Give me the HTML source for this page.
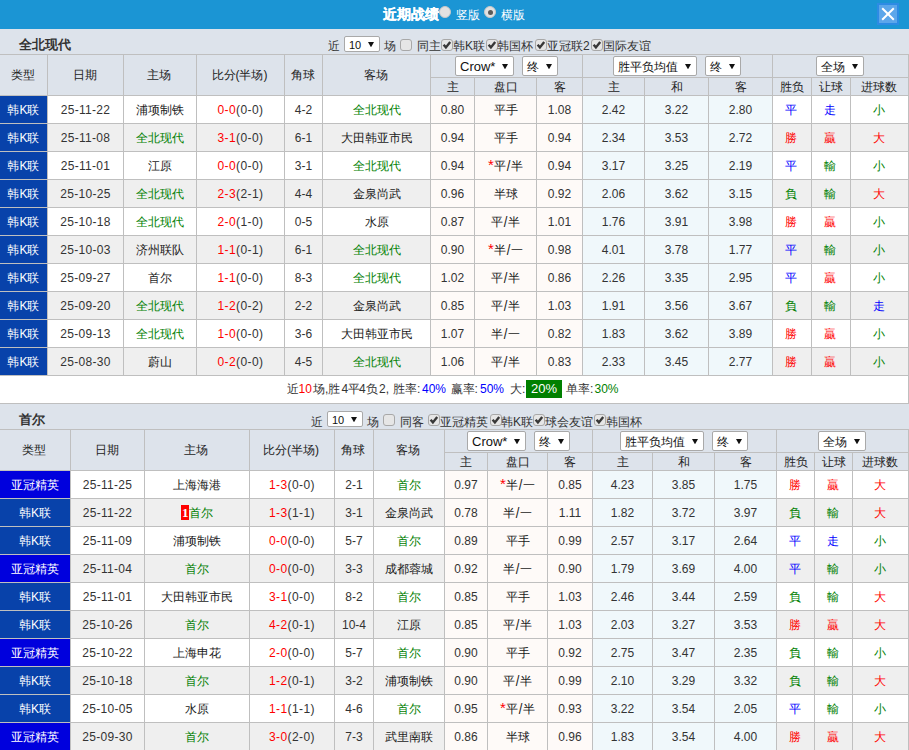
<!DOCTYPE html><html><head><meta charset="utf-8"><style>
*{margin:0;padding:0;box-sizing:border-box}
html,body{width:909px;height:750px;overflow:hidden;background:#fff}
body{position:relative;font-family:"Liberation Sans",sans-serif;font-size:12px;color:#333}
body>div{position:absolute}
.c{display:flex;align-items:center;justify-content:center;white-space:nowrap;font-size:12px}
.t{white-space:nowrap;font-size:12px}
.sel{background:#fff;border:1px solid #a9a9a9;border-radius:2px;white-space:nowrap;color:#111}
.sel span{position:absolute;left:4px;top:1px}
.sel svg{position:absolute}
.cb{width:12px;height:12px;border:1px solid #a8a8a8;border-radius:3px;background:#e6e6e6}
.cb svg{position:absolute;left:-1px;top:-1px}
.radio{border-radius:50%;background:#e2e2e2;border:1px solid #c8c8c8}
.radio i{position:absolute;left:2.5px;top:2.5px;width:5px;height:5px;border-radius:50%;background:#5a5a5a}
.badge{background:#f00;color:#fff;font-weight:bold;padding:0 1px;font-size:13px;line-height:15px;display:inline-block;width:8px;font-family:'Liberation Serif',serif;vertical-align:top;margin-top:0;text-align:center}
.z{position:relative;top:1px}
i{font-style:normal}
.sl{display:inline-block;width:5px;text-align:center;font-size:13px;transform:scaleY(1.15)}
.st{display:inline-block;width:6px;color:#f00;font-size:15px;line-height:12px;vertical-align:top;margin-top:1px}
.big{background:#008000;color:#fff;padding:2px 4px}
</style></head><body><div style="left:0px;top:0px;width:909px;height:29px;background:#1b95d4"></div>
<div class="t" style="left:383px;top:5px;color:#fff;font-weight:bold;font-size:14px;line-height:18px;-webkit-text-stroke:0.3px #fff">近期战绩</div>
<div class="radio" style="left:439px;top:6px;width:12px;height:12px;"></div>
<div class="t" style="left:456px;top:6px;color:#fff;font-size:12px;line-height:18px">竖版</div>
<div class="radio" style="left:484px;top:6px;width:12px;height:12px;"><i></i></div>
<div class="t" style="left:501px;top:6px;color:#fff;font-size:12px;line-height:18px">横版</div>
<div style="left:877px;top:3px;width:22px;height:22px"><svg width="22" height="22" viewBox="0 0 22 22"><rect x="0" y="0" width="22" height="22" fill="#2d8be4"/><rect x="2" y="2" width="18" height="18" fill="#5ca6ea"/><path d="M5.2 5.2L16.8 16.8M16.8 5.2L5.2 16.8" stroke="#fff" stroke-width="2"/></svg></div>
<div style="left:0px;top:29px;width:909px;height:25px;background:#dde3eb"></div>
<div class="t" style="left:19px;top:37px;font-weight:bold;font-size:13px;color:#333;line-height:16px">全北现代</div>
<div class="t" style="left:328px;top:37.5px;line-height:16px">近</div>
<div class="sel" style="left:344px;top:36px;width:36px;height:16px"><span style="font-size:11px;line-height:14px">10</span><svg width="6" height="5" style="right:5px;top:5px"><path d="M0 0H6L3 5.3Z" fill="#111"/></svg></div>
<div class="t" style="left:384px;top:37.5px;line-height:16px">场</div>
<div class="cb" style="left:400px;top:39px"></div>
<div class="t" style="left:417px;top:37.5px;line-height:16px">同主</div>
<div class="cb" style="left:441px;top:39px"><svg width="12" height="12" viewBox="0 0 12 12"><path d="M2.6 5.8L4.9 8.4L9.2 3" fill="none" stroke="#383838" stroke-width="2.4"/></svg></div>
<div class="t" style="left:453px;top:37.5px;line-height:16px">韩K联</div>
<div class="cb" style="left:486px;top:39px"><svg width="12" height="12" viewBox="0 0 12 12"><path d="M2.6 5.8L4.9 8.4L9.2 3" fill="none" stroke="#383838" stroke-width="2.4"/></svg></div>
<div class="t" style="left:497px;top:37.5px;line-height:16px">韩国杯</div>
<div class="cb" style="left:535px;top:39px"><svg width="12" height="12" viewBox="0 0 12 12"><path d="M2.6 5.8L4.9 8.4L9.2 3" fill="none" stroke="#383838" stroke-width="2.4"/></svg></div>
<div class="t" style="left:547px;top:37.5px;line-height:16px">亚冠联2</div>
<div class="cb" style="left:591px;top:39px"><svg width="12" height="12" viewBox="0 0 12 12"><path d="M2.6 5.8L4.9 8.4L9.2 3" fill="none" stroke="#383838" stroke-width="2.4"/></svg></div>
<div class="t" style="left:603px;top:37.5px;line-height:16px">国际友谊</div>
<div style="left:0px;top:54px;width:909px;height:1px;background:#bfbfbf"></div>
<div style="left:0px;top:55px;width:909px;height:40px;background:#dde3eb"></div>
<div class="c" style="left:-1px;top:55px;width:47px;height:40px;color:#222">类型</div>
<div class="c" style="left:47px;top:55px;width:75px;height:40px;color:#222">日期</div>
<div class="c" style="left:123px;top:55px;width:72px;height:40px;color:#222">主场</div>
<div class="c" style="left:196px;top:55px;width:87px;height:40px;color:#222">比分(半场)</div>
<div class="c" style="left:284px;top:55px;width:37px;height:40px;color:#222">角球</div>
<div class="c" style="left:322px;top:55px;width:107px;height:40px;color:#222">客场</div>
<div style="left:47px;top:55px;width:1px;height:40px;background:#bfbfbf"></div>
<div style="left:123px;top:55px;width:1px;height:40px;background:#bfbfbf"></div>
<div style="left:196px;top:55px;width:1px;height:40px;background:#bfbfbf"></div>
<div style="left:284px;top:55px;width:1px;height:40px;background:#bfbfbf"></div>
<div style="left:322px;top:55px;width:1px;height:40px;background:#bfbfbf"></div>
<div style="left:430px;top:55px;width:1px;height:40px;background:#bfbfbf"></div>
<div style="left:582px;top:55px;width:1px;height:40px;background:#bfbfbf"></div>
<div style="left:772px;top:55px;width:1px;height:40px;background:#bfbfbf"></div>
<div style="left:908px;top:55px;width:1px;height:40px;background:#bfbfbf"></div>
<div style="left:430px;top:77px;width:479px;height:1px;background:#bfbfbf"></div>
<div class="c" style="left:431px;top:78px;width:43px;height:17px;color:#222"><span class="z">主</span></div>
<div style="left:474px;top:78px;width:1px;height:17px;background:#bfbfbf"></div>
<div class="c" style="left:475px;top:78px;width:61px;height:17px;color:#222"><span class="z">盘口</span></div>
<div style="left:536px;top:78px;width:1px;height:17px;background:#bfbfbf"></div>
<div class="c" style="left:537px;top:78px;width:45px;height:17px;color:#222"><span class="z">客</span></div>
<div style="left:582px;top:78px;width:1px;height:17px;background:#bfbfbf"></div>
<div class="c" style="left:583px;top:78px;width:61px;height:17px;color:#222"><span class="z">主</span></div>
<div style="left:644px;top:78px;width:1px;height:17px;background:#bfbfbf"></div>
<div class="c" style="left:645px;top:78px;width:63px;height:17px;color:#222"><span class="z">和</span></div>
<div style="left:708px;top:78px;width:1px;height:17px;background:#bfbfbf"></div>
<div class="c" style="left:709px;top:78px;width:63px;height:17px;color:#222"><span class="z">客</span></div>
<div style="left:772px;top:78px;width:1px;height:17px;background:#bfbfbf"></div>
<div class="c" style="left:773px;top:78px;width:38px;height:17px;color:#222"><span class="z">胜负</span></div>
<div style="left:811px;top:78px;width:1px;height:17px;background:#bfbfbf"></div>
<div class="c" style="left:812px;top:78px;width:38px;height:17px;color:#222"><span class="z">让球</span></div>
<div style="left:850px;top:78px;width:1px;height:17px;background:#bfbfbf"></div>
<div class="c" style="left:851px;top:78px;width:56px;height:17px;color:#222"><span class="z">进球数</span></div>
<div style="left:908px;top:78px;width:1px;height:17px;background:#bfbfbf"></div>
<div class="sel" style="left:455px;top:56px;width:59px;height:20px"><span style="font-size:13px;line-height:18px">Crow*</span><svg width="6" height="5" style="right:5px;top:7px"><path d="M0 0H6L3 5.3Z" fill="#111"/></svg></div>
<div class="sel" style="left:522px;top:56px;width:36px;height:20px"><span style="font-size:12px;line-height:18px">终</span><svg width="6" height="5" style="right:5px;top:7px"><path d="M0 0H6L3 5.3Z" fill="#111"/></svg></div>
<div class="sel" style="left:613px;top:56px;width:84px;height:20px"><span style="font-size:12px;line-height:18px">胜平负均值</span><svg width="6" height="5" style="right:5px;top:7px"><path d="M0 0H6L3 5.3Z" fill="#111"/></svg></div>
<div class="sel" style="left:705px;top:56px;width:36px;height:20px"><span style="font-size:12px;line-height:18px">终</span><svg width="6" height="5" style="right:5px;top:7px"><path d="M0 0H6L3 5.3Z" fill="#111"/></svg></div>
<div class="sel" style="left:816px;top:56px;width:48px;height:20px"><span style="font-size:12px;line-height:18px">全场</span><svg width="6" height="5" style="right:5px;top:7px"><path d="M0 0H6L3 5.3Z" fill="#111"/></svg></div>
<div style="left:0px;top:95px;width:909px;height:1px;background:#bfbfbf"></div>
<div class="c" style="left:0px;top:96px;width:47px;height:27px;background:#0842aa;color:#fff"><span class="z">韩K联</span></div>
<div class="c" style="left:48px;top:96px;width:75px;height:27px;background:#ffffff;color:#333"><span style="letter-spacing:.3px">25-11-22</span></div>
<div class="c" style="left:124px;top:96px;width:72px;height:27px;background:#ffffff;color:#1a1a1a"><span class="z">浦项制铁</span></div>
<div class="c" style="left:197px;top:96px;width:87px;height:27px;background:#ffffff;color:#333"><span style="letter-spacing:.4px"><span style="color:#ff0000">0-0</span>(0-0)</span></div>
<div class="c" style="left:285px;top:96px;width:37px;height:27px;background:#ffffff;color:#333">4-2</div>
<div class="c" style="left:323px;top:96px;width:107px;height:27px;background:#ffffff;color:#1a1a1a"><span class="z"><span style="color:#008000">全北现代</span></span></div>
<div class="c" style="left:431px;top:96px;width:43px;height:27px;background:#fefaf8;color:#333">0.80</div>
<div class="c" style="left:475px;top:96px;width:61px;height:27px;background:#fefaf8;color:#1a1a1a"><span class="z">平手</span></div>
<div class="c" style="left:537px;top:96px;width:45px;height:27px;background:#fefaf8;color:#333">1.08</div>
<div class="c" style="left:583px;top:96px;width:61px;height:27px;background:#f0f8fb;color:#333">2.42</div>
<div class="c" style="left:645px;top:96px;width:63px;height:27px;background:#f0f8fb;color:#333">3.22</div>
<div class="c" style="left:709px;top:96px;width:63px;height:27px;background:#f0f8fb;color:#333">2.80</div>
<div class="c" style="left:773px;top:96px;width:38px;height:27px;background:#ffffff;color:#333;padding-right:2px"><span class="z"><span style="color:#0000ff">平</span></span></div>
<div class="c" style="left:812px;top:96px;width:38px;height:27px;background:#ffffff;color:#333;padding-right:2px"><span class="z"><span style="color:#0000ff">走</span></span></div>
<div class="c" style="left:851px;top:96px;width:57px;height:27px;background:#ffffff;color:#333;padding-right:2px"><span class="z"><span style="color:#008000">小</span></span></div>
<div style="left:47px;top:96px;width:1px;height:27px;background:#bfbfbf"></div>
<div style="left:123px;top:96px;width:1px;height:27px;background:#bfbfbf"></div>
<div style="left:196px;top:96px;width:1px;height:27px;background:#bfbfbf"></div>
<div style="left:284px;top:96px;width:1px;height:27px;background:#bfbfbf"></div>
<div style="left:322px;top:96px;width:1px;height:27px;background:#bfbfbf"></div>
<div style="left:430px;top:96px;width:1px;height:27px;background:#bfbfbf"></div>
<div style="left:474px;top:96px;width:1px;height:27px;background:#bfbfbf"></div>
<div style="left:536px;top:96px;width:1px;height:27px;background:#bfbfbf"></div>
<div style="left:582px;top:96px;width:1px;height:27px;background:#bfbfbf"></div>
<div style="left:644px;top:96px;width:1px;height:27px;background:#bfbfbf"></div>
<div style="left:708px;top:96px;width:1px;height:27px;background:#bfbfbf"></div>
<div style="left:772px;top:96px;width:1px;height:27px;background:#bfbfbf"></div>
<div style="left:811px;top:96px;width:1px;height:27px;background:#bfbfbf"></div>
<div style="left:850px;top:96px;width:1px;height:27px;background:#bfbfbf"></div>
<div style="left:908px;top:96px;width:1px;height:27px;background:#bfbfbf"></div>
<div style="left:0px;top:123px;width:909px;height:1px;background:#bfbfbf"></div>
<div class="c" style="left:0px;top:124px;width:47px;height:27px;background:#0842aa;color:#fff"><span class="z">韩K联</span></div>
<div class="c" style="left:48px;top:124px;width:75px;height:27px;background:#efefef;color:#333"><span style="letter-spacing:.3px">25-11-08</span></div>
<div class="c" style="left:124px;top:124px;width:72px;height:27px;background:#efefef;color:#1a1a1a"><span class="z"><span style="color:#008000">全北现代</span></span></div>
<div class="c" style="left:197px;top:124px;width:87px;height:27px;background:#efefef;color:#333"><span style="letter-spacing:.4px"><span style="color:#ff0000">3-1</span>(0-0)</span></div>
<div class="c" style="left:285px;top:124px;width:37px;height:27px;background:#efefef;color:#333">6-1</div>
<div class="c" style="left:323px;top:124px;width:107px;height:27px;background:#efefef;color:#1a1a1a"><span class="z">大田韩亚市民</span></div>
<div class="c" style="left:431px;top:124px;width:43px;height:27px;background:#fefaf8;color:#333">0.94</div>
<div class="c" style="left:475px;top:124px;width:61px;height:27px;background:#fefaf8;color:#1a1a1a"><span class="z">平手</span></div>
<div class="c" style="left:537px;top:124px;width:45px;height:27px;background:#fefaf8;color:#333">0.94</div>
<div class="c" style="left:583px;top:124px;width:61px;height:27px;background:#f0f8fb;color:#333">2.34</div>
<div class="c" style="left:645px;top:124px;width:63px;height:27px;background:#f0f8fb;color:#333">3.53</div>
<div class="c" style="left:709px;top:124px;width:63px;height:27px;background:#f0f8fb;color:#333">2.72</div>
<div class="c" style="left:773px;top:124px;width:38px;height:27px;background:#efefef;color:#333;padding-right:2px"><span class="z"><span style="color:#ff0000">勝</span></span></div>
<div class="c" style="left:812px;top:124px;width:38px;height:27px;background:#efefef;color:#333;padding-right:2px"><span class="z"><span style="color:#ff0000">贏</span></span></div>
<div class="c" style="left:851px;top:124px;width:57px;height:27px;background:#efefef;color:#333;padding-right:2px"><span class="z"><span style="color:#ff0000">大</span></span></div>
<div style="left:47px;top:124px;width:1px;height:27px;background:#bfbfbf"></div>
<div style="left:123px;top:124px;width:1px;height:27px;background:#bfbfbf"></div>
<div style="left:196px;top:124px;width:1px;height:27px;background:#bfbfbf"></div>
<div style="left:284px;top:124px;width:1px;height:27px;background:#bfbfbf"></div>
<div style="left:322px;top:124px;width:1px;height:27px;background:#bfbfbf"></div>
<div style="left:430px;top:124px;width:1px;height:27px;background:#bfbfbf"></div>
<div style="left:474px;top:124px;width:1px;height:27px;background:#bfbfbf"></div>
<div style="left:536px;top:124px;width:1px;height:27px;background:#bfbfbf"></div>
<div style="left:582px;top:124px;width:1px;height:27px;background:#bfbfbf"></div>
<div style="left:644px;top:124px;width:1px;height:27px;background:#bfbfbf"></div>
<div style="left:708px;top:124px;width:1px;height:27px;background:#bfbfbf"></div>
<div style="left:772px;top:124px;width:1px;height:27px;background:#bfbfbf"></div>
<div style="left:811px;top:124px;width:1px;height:27px;background:#bfbfbf"></div>
<div style="left:850px;top:124px;width:1px;height:27px;background:#bfbfbf"></div>
<div style="left:908px;top:124px;width:1px;height:27px;background:#bfbfbf"></div>
<div style="left:0px;top:151px;width:909px;height:1px;background:#bfbfbf"></div>
<div class="c" style="left:0px;top:152px;width:47px;height:27px;background:#0842aa;color:#fff"><span class="z">韩K联</span></div>
<div class="c" style="left:48px;top:152px;width:75px;height:27px;background:#ffffff;color:#333"><span style="letter-spacing:.3px">25-11-01</span></div>
<div class="c" style="left:124px;top:152px;width:72px;height:27px;background:#ffffff;color:#1a1a1a"><span class="z">江原</span></div>
<div class="c" style="left:197px;top:152px;width:87px;height:27px;background:#ffffff;color:#333"><span style="letter-spacing:.4px"><span style="color:#ff0000">0-0</span>(0-0)</span></div>
<div class="c" style="left:285px;top:152px;width:37px;height:27px;background:#ffffff;color:#333">3-1</div>
<div class="c" style="left:323px;top:152px;width:107px;height:27px;background:#ffffff;color:#1a1a1a"><span class="z"><span style="color:#008000">全北现代</span></span></div>
<div class="c" style="left:431px;top:152px;width:43px;height:27px;background:#fefaf8;color:#333">0.94</div>
<div class="c" style="left:475px;top:152px;width:61px;height:27px;background:#fefaf8;color:#1a1a1a"><span class="z"><i class="st">*</i>平<i class="sl">/</i>半</span></div>
<div class="c" style="left:537px;top:152px;width:45px;height:27px;background:#fefaf8;color:#333">0.94</div>
<div class="c" style="left:583px;top:152px;width:61px;height:27px;background:#f0f8fb;color:#333">3.17</div>
<div class="c" style="left:645px;top:152px;width:63px;height:27px;background:#f0f8fb;color:#333">3.25</div>
<div class="c" style="left:709px;top:152px;width:63px;height:27px;background:#f0f8fb;color:#333">2.19</div>
<div class="c" style="left:773px;top:152px;width:38px;height:27px;background:#ffffff;color:#333;padding-right:2px"><span class="z"><span style="color:#0000ff">平</span></span></div>
<div class="c" style="left:812px;top:152px;width:38px;height:27px;background:#ffffff;color:#333;padding-right:2px"><span class="z"><span style="color:#008000">輸</span></span></div>
<div class="c" style="left:851px;top:152px;width:57px;height:27px;background:#ffffff;color:#333;padding-right:2px"><span class="z"><span style="color:#008000">小</span></span></div>
<div style="left:47px;top:152px;width:1px;height:27px;background:#bfbfbf"></div>
<div style="left:123px;top:152px;width:1px;height:27px;background:#bfbfbf"></div>
<div style="left:196px;top:152px;width:1px;height:27px;background:#bfbfbf"></div>
<div style="left:284px;top:152px;width:1px;height:27px;background:#bfbfbf"></div>
<div style="left:322px;top:152px;width:1px;height:27px;background:#bfbfbf"></div>
<div style="left:430px;top:152px;width:1px;height:27px;background:#bfbfbf"></div>
<div style="left:474px;top:152px;width:1px;height:27px;background:#bfbfbf"></div>
<div style="left:536px;top:152px;width:1px;height:27px;background:#bfbfbf"></div>
<div style="left:582px;top:152px;width:1px;height:27px;background:#bfbfbf"></div>
<div style="left:644px;top:152px;width:1px;height:27px;background:#bfbfbf"></div>
<div style="left:708px;top:152px;width:1px;height:27px;background:#bfbfbf"></div>
<div style="left:772px;top:152px;width:1px;height:27px;background:#bfbfbf"></div>
<div style="left:811px;top:152px;width:1px;height:27px;background:#bfbfbf"></div>
<div style="left:850px;top:152px;width:1px;height:27px;background:#bfbfbf"></div>
<div style="left:908px;top:152px;width:1px;height:27px;background:#bfbfbf"></div>
<div style="left:0px;top:179px;width:909px;height:1px;background:#bfbfbf"></div>
<div class="c" style="left:0px;top:180px;width:47px;height:27px;background:#0842aa;color:#fff"><span class="z">韩K联</span></div>
<div class="c" style="left:48px;top:180px;width:75px;height:27px;background:#efefef;color:#333"><span style="letter-spacing:.3px">25-10-25</span></div>
<div class="c" style="left:124px;top:180px;width:72px;height:27px;background:#efefef;color:#1a1a1a"><span class="z"><span style="color:#008000">全北现代</span></span></div>
<div class="c" style="left:197px;top:180px;width:87px;height:27px;background:#efefef;color:#333"><span style="letter-spacing:.4px"><span style="color:#ff0000">2-3</span>(2-1)</span></div>
<div class="c" style="left:285px;top:180px;width:37px;height:27px;background:#efefef;color:#333">4-4</div>
<div class="c" style="left:323px;top:180px;width:107px;height:27px;background:#efefef;color:#1a1a1a"><span class="z">金泉尚武</span></div>
<div class="c" style="left:431px;top:180px;width:43px;height:27px;background:#fefaf8;color:#333">0.96</div>
<div class="c" style="left:475px;top:180px;width:61px;height:27px;background:#fefaf8;color:#1a1a1a"><span class="z">半球</span></div>
<div class="c" style="left:537px;top:180px;width:45px;height:27px;background:#fefaf8;color:#333">0.92</div>
<div class="c" style="left:583px;top:180px;width:61px;height:27px;background:#f0f8fb;color:#333">2.06</div>
<div class="c" style="left:645px;top:180px;width:63px;height:27px;background:#f0f8fb;color:#333">3.62</div>
<div class="c" style="left:709px;top:180px;width:63px;height:27px;background:#f0f8fb;color:#333">3.15</div>
<div class="c" style="left:773px;top:180px;width:38px;height:27px;background:#efefef;color:#333;padding-right:2px"><span class="z"><span style="color:#008000">負</span></span></div>
<div class="c" style="left:812px;top:180px;width:38px;height:27px;background:#efefef;color:#333;padding-right:2px"><span class="z"><span style="color:#008000">輸</span></span></div>
<div class="c" style="left:851px;top:180px;width:57px;height:27px;background:#efefef;color:#333;padding-right:2px"><span class="z"><span style="color:#ff0000">大</span></span></div>
<div style="left:47px;top:180px;width:1px;height:27px;background:#bfbfbf"></div>
<div style="left:123px;top:180px;width:1px;height:27px;background:#bfbfbf"></div>
<div style="left:196px;top:180px;width:1px;height:27px;background:#bfbfbf"></div>
<div style="left:284px;top:180px;width:1px;height:27px;background:#bfbfbf"></div>
<div style="left:322px;top:180px;width:1px;height:27px;background:#bfbfbf"></div>
<div style="left:430px;top:180px;width:1px;height:27px;background:#bfbfbf"></div>
<div style="left:474px;top:180px;width:1px;height:27px;background:#bfbfbf"></div>
<div style="left:536px;top:180px;width:1px;height:27px;background:#bfbfbf"></div>
<div style="left:582px;top:180px;width:1px;height:27px;background:#bfbfbf"></div>
<div style="left:644px;top:180px;width:1px;height:27px;background:#bfbfbf"></div>
<div style="left:708px;top:180px;width:1px;height:27px;background:#bfbfbf"></div>
<div style="left:772px;top:180px;width:1px;height:27px;background:#bfbfbf"></div>
<div style="left:811px;top:180px;width:1px;height:27px;background:#bfbfbf"></div>
<div style="left:850px;top:180px;width:1px;height:27px;background:#bfbfbf"></div>
<div style="left:908px;top:180px;width:1px;height:27px;background:#bfbfbf"></div>
<div style="left:0px;top:207px;width:909px;height:1px;background:#bfbfbf"></div>
<div class="c" style="left:0px;top:208px;width:47px;height:27px;background:#0842aa;color:#fff"><span class="z">韩K联</span></div>
<div class="c" style="left:48px;top:208px;width:75px;height:27px;background:#ffffff;color:#333"><span style="letter-spacing:.3px">25-10-18</span></div>
<div class="c" style="left:124px;top:208px;width:72px;height:27px;background:#ffffff;color:#1a1a1a"><span class="z"><span style="color:#008000">全北现代</span></span></div>
<div class="c" style="left:197px;top:208px;width:87px;height:27px;background:#ffffff;color:#333"><span style="letter-spacing:.4px"><span style="color:#ff0000">2-0</span>(1-0)</span></div>
<div class="c" style="left:285px;top:208px;width:37px;height:27px;background:#ffffff;color:#333">0-5</div>
<div class="c" style="left:323px;top:208px;width:107px;height:27px;background:#ffffff;color:#1a1a1a"><span class="z">水原</span></div>
<div class="c" style="left:431px;top:208px;width:43px;height:27px;background:#fefaf8;color:#333">0.87</div>
<div class="c" style="left:475px;top:208px;width:61px;height:27px;background:#fefaf8;color:#1a1a1a"><span class="z">平<i class="sl">/</i>半</span></div>
<div class="c" style="left:537px;top:208px;width:45px;height:27px;background:#fefaf8;color:#333">1.01</div>
<div class="c" style="left:583px;top:208px;width:61px;height:27px;background:#f0f8fb;color:#333">1.76</div>
<div class="c" style="left:645px;top:208px;width:63px;height:27px;background:#f0f8fb;color:#333">3.91</div>
<div class="c" style="left:709px;top:208px;width:63px;height:27px;background:#f0f8fb;color:#333">3.98</div>
<div class="c" style="left:773px;top:208px;width:38px;height:27px;background:#ffffff;color:#333;padding-right:2px"><span class="z"><span style="color:#ff0000">勝</span></span></div>
<div class="c" style="left:812px;top:208px;width:38px;height:27px;background:#ffffff;color:#333;padding-right:2px"><span class="z"><span style="color:#ff0000">贏</span></span></div>
<div class="c" style="left:851px;top:208px;width:57px;height:27px;background:#ffffff;color:#333;padding-right:2px"><span class="z"><span style="color:#008000">小</span></span></div>
<div style="left:47px;top:208px;width:1px;height:27px;background:#bfbfbf"></div>
<div style="left:123px;top:208px;width:1px;height:27px;background:#bfbfbf"></div>
<div style="left:196px;top:208px;width:1px;height:27px;background:#bfbfbf"></div>
<div style="left:284px;top:208px;width:1px;height:27px;background:#bfbfbf"></div>
<div style="left:322px;top:208px;width:1px;height:27px;background:#bfbfbf"></div>
<div style="left:430px;top:208px;width:1px;height:27px;background:#bfbfbf"></div>
<div style="left:474px;top:208px;width:1px;height:27px;background:#bfbfbf"></div>
<div style="left:536px;top:208px;width:1px;height:27px;background:#bfbfbf"></div>
<div style="left:582px;top:208px;width:1px;height:27px;background:#bfbfbf"></div>
<div style="left:644px;top:208px;width:1px;height:27px;background:#bfbfbf"></div>
<div style="left:708px;top:208px;width:1px;height:27px;background:#bfbfbf"></div>
<div style="left:772px;top:208px;width:1px;height:27px;background:#bfbfbf"></div>
<div style="left:811px;top:208px;width:1px;height:27px;background:#bfbfbf"></div>
<div style="left:850px;top:208px;width:1px;height:27px;background:#bfbfbf"></div>
<div style="left:908px;top:208px;width:1px;height:27px;background:#bfbfbf"></div>
<div style="left:0px;top:235px;width:909px;height:1px;background:#bfbfbf"></div>
<div class="c" style="left:0px;top:236px;width:47px;height:27px;background:#0842aa;color:#fff"><span class="z">韩K联</span></div>
<div class="c" style="left:48px;top:236px;width:75px;height:27px;background:#efefef;color:#333"><span style="letter-spacing:.3px">25-10-03</span></div>
<div class="c" style="left:124px;top:236px;width:72px;height:27px;background:#efefef;color:#1a1a1a"><span class="z">济州联队</span></div>
<div class="c" style="left:197px;top:236px;width:87px;height:27px;background:#efefef;color:#333"><span style="letter-spacing:.4px"><span style="color:#ff0000">1-1</span>(0-1)</span></div>
<div class="c" style="left:285px;top:236px;width:37px;height:27px;background:#efefef;color:#333">6-1</div>
<div class="c" style="left:323px;top:236px;width:107px;height:27px;background:#efefef;color:#1a1a1a"><span class="z"><span style="color:#008000">全北现代</span></span></div>
<div class="c" style="left:431px;top:236px;width:43px;height:27px;background:#fefaf8;color:#333">0.90</div>
<div class="c" style="left:475px;top:236px;width:61px;height:27px;background:#fefaf8;color:#1a1a1a"><span class="z"><i class="st">*</i>半<i class="sl">/</i>一</span></div>
<div class="c" style="left:537px;top:236px;width:45px;height:27px;background:#fefaf8;color:#333">0.98</div>
<div class="c" style="left:583px;top:236px;width:61px;height:27px;background:#f0f8fb;color:#333">4.01</div>
<div class="c" style="left:645px;top:236px;width:63px;height:27px;background:#f0f8fb;color:#333">3.78</div>
<div class="c" style="left:709px;top:236px;width:63px;height:27px;background:#f0f8fb;color:#333">1.77</div>
<div class="c" style="left:773px;top:236px;width:38px;height:27px;background:#efefef;color:#333;padding-right:2px"><span class="z"><span style="color:#0000ff">平</span></span></div>
<div class="c" style="left:812px;top:236px;width:38px;height:27px;background:#efefef;color:#333;padding-right:2px"><span class="z"><span style="color:#008000">輸</span></span></div>
<div class="c" style="left:851px;top:236px;width:57px;height:27px;background:#efefef;color:#333;padding-right:2px"><span class="z"><span style="color:#008000">小</span></span></div>
<div style="left:47px;top:236px;width:1px;height:27px;background:#bfbfbf"></div>
<div style="left:123px;top:236px;width:1px;height:27px;background:#bfbfbf"></div>
<div style="left:196px;top:236px;width:1px;height:27px;background:#bfbfbf"></div>
<div style="left:284px;top:236px;width:1px;height:27px;background:#bfbfbf"></div>
<div style="left:322px;top:236px;width:1px;height:27px;background:#bfbfbf"></div>
<div style="left:430px;top:236px;width:1px;height:27px;background:#bfbfbf"></div>
<div style="left:474px;top:236px;width:1px;height:27px;background:#bfbfbf"></div>
<div style="left:536px;top:236px;width:1px;height:27px;background:#bfbfbf"></div>
<div style="left:582px;top:236px;width:1px;height:27px;background:#bfbfbf"></div>
<div style="left:644px;top:236px;width:1px;height:27px;background:#bfbfbf"></div>
<div style="left:708px;top:236px;width:1px;height:27px;background:#bfbfbf"></div>
<div style="left:772px;top:236px;width:1px;height:27px;background:#bfbfbf"></div>
<div style="left:811px;top:236px;width:1px;height:27px;background:#bfbfbf"></div>
<div style="left:850px;top:236px;width:1px;height:27px;background:#bfbfbf"></div>
<div style="left:908px;top:236px;width:1px;height:27px;background:#bfbfbf"></div>
<div style="left:0px;top:263px;width:909px;height:1px;background:#bfbfbf"></div>
<div class="c" style="left:0px;top:264px;width:47px;height:27px;background:#0842aa;color:#fff"><span class="z">韩K联</span></div>
<div class="c" style="left:48px;top:264px;width:75px;height:27px;background:#ffffff;color:#333"><span style="letter-spacing:.3px">25-09-27</span></div>
<div class="c" style="left:124px;top:264px;width:72px;height:27px;background:#ffffff;color:#1a1a1a"><span class="z">首尔</span></div>
<div class="c" style="left:197px;top:264px;width:87px;height:27px;background:#ffffff;color:#333"><span style="letter-spacing:.4px"><span style="color:#ff0000">1-1</span>(0-0)</span></div>
<div class="c" style="left:285px;top:264px;width:37px;height:27px;background:#ffffff;color:#333">8-3</div>
<div class="c" style="left:323px;top:264px;width:107px;height:27px;background:#ffffff;color:#1a1a1a"><span class="z"><span style="color:#008000">全北现代</span></span></div>
<div class="c" style="left:431px;top:264px;width:43px;height:27px;background:#fefaf8;color:#333">1.02</div>
<div class="c" style="left:475px;top:264px;width:61px;height:27px;background:#fefaf8;color:#1a1a1a"><span class="z">平<i class="sl">/</i>半</span></div>
<div class="c" style="left:537px;top:264px;width:45px;height:27px;background:#fefaf8;color:#333">0.86</div>
<div class="c" style="left:583px;top:264px;width:61px;height:27px;background:#f0f8fb;color:#333">2.26</div>
<div class="c" style="left:645px;top:264px;width:63px;height:27px;background:#f0f8fb;color:#333">3.35</div>
<div class="c" style="left:709px;top:264px;width:63px;height:27px;background:#f0f8fb;color:#333">2.95</div>
<div class="c" style="left:773px;top:264px;width:38px;height:27px;background:#ffffff;color:#333;padding-right:2px"><span class="z"><span style="color:#0000ff">平</span></span></div>
<div class="c" style="left:812px;top:264px;width:38px;height:27px;background:#ffffff;color:#333;padding-right:2px"><span class="z"><span style="color:#ff0000">贏</span></span></div>
<div class="c" style="left:851px;top:264px;width:57px;height:27px;background:#ffffff;color:#333;padding-right:2px"><span class="z"><span style="color:#008000">小</span></span></div>
<div style="left:47px;top:264px;width:1px;height:27px;background:#bfbfbf"></div>
<div style="left:123px;top:264px;width:1px;height:27px;background:#bfbfbf"></div>
<div style="left:196px;top:264px;width:1px;height:27px;background:#bfbfbf"></div>
<div style="left:284px;top:264px;width:1px;height:27px;background:#bfbfbf"></div>
<div style="left:322px;top:264px;width:1px;height:27px;background:#bfbfbf"></div>
<div style="left:430px;top:264px;width:1px;height:27px;background:#bfbfbf"></div>
<div style="left:474px;top:264px;width:1px;height:27px;background:#bfbfbf"></div>
<div style="left:536px;top:264px;width:1px;height:27px;background:#bfbfbf"></div>
<div style="left:582px;top:264px;width:1px;height:27px;background:#bfbfbf"></div>
<div style="left:644px;top:264px;width:1px;height:27px;background:#bfbfbf"></div>
<div style="left:708px;top:264px;width:1px;height:27px;background:#bfbfbf"></div>
<div style="left:772px;top:264px;width:1px;height:27px;background:#bfbfbf"></div>
<div style="left:811px;top:264px;width:1px;height:27px;background:#bfbfbf"></div>
<div style="left:850px;top:264px;width:1px;height:27px;background:#bfbfbf"></div>
<div style="left:908px;top:264px;width:1px;height:27px;background:#bfbfbf"></div>
<div style="left:0px;top:291px;width:909px;height:1px;background:#bfbfbf"></div>
<div class="c" style="left:0px;top:292px;width:47px;height:27px;background:#0842aa;color:#fff"><span class="z">韩K联</span></div>
<div class="c" style="left:48px;top:292px;width:75px;height:27px;background:#efefef;color:#333"><span style="letter-spacing:.3px">25-09-20</span></div>
<div class="c" style="left:124px;top:292px;width:72px;height:27px;background:#efefef;color:#1a1a1a"><span class="z"><span style="color:#008000">全北现代</span></span></div>
<div class="c" style="left:197px;top:292px;width:87px;height:27px;background:#efefef;color:#333"><span style="letter-spacing:.4px"><span style="color:#ff0000">1-2</span>(0-2)</span></div>
<div class="c" style="left:285px;top:292px;width:37px;height:27px;background:#efefef;color:#333">2-2</div>
<div class="c" style="left:323px;top:292px;width:107px;height:27px;background:#efefef;color:#1a1a1a"><span class="z">金泉尚武</span></div>
<div class="c" style="left:431px;top:292px;width:43px;height:27px;background:#fefaf8;color:#333">0.85</div>
<div class="c" style="left:475px;top:292px;width:61px;height:27px;background:#fefaf8;color:#1a1a1a"><span class="z">平<i class="sl">/</i>半</span></div>
<div class="c" style="left:537px;top:292px;width:45px;height:27px;background:#fefaf8;color:#333">1.03</div>
<div class="c" style="left:583px;top:292px;width:61px;height:27px;background:#f0f8fb;color:#333">1.91</div>
<div class="c" style="left:645px;top:292px;width:63px;height:27px;background:#f0f8fb;color:#333">3.56</div>
<div class="c" style="left:709px;top:292px;width:63px;height:27px;background:#f0f8fb;color:#333">3.67</div>
<div class="c" style="left:773px;top:292px;width:38px;height:27px;background:#efefef;color:#333;padding-right:2px"><span class="z"><span style="color:#008000">負</span></span></div>
<div class="c" style="left:812px;top:292px;width:38px;height:27px;background:#efefef;color:#333;padding-right:2px"><span class="z"><span style="color:#008000">輸</span></span></div>
<div class="c" style="left:851px;top:292px;width:57px;height:27px;background:#efefef;color:#333;padding-right:2px"><span class="z"><span style="color:#0000ff">走</span></span></div>
<div style="left:47px;top:292px;width:1px;height:27px;background:#bfbfbf"></div>
<div style="left:123px;top:292px;width:1px;height:27px;background:#bfbfbf"></div>
<div style="left:196px;top:292px;width:1px;height:27px;background:#bfbfbf"></div>
<div style="left:284px;top:292px;width:1px;height:27px;background:#bfbfbf"></div>
<div style="left:322px;top:292px;width:1px;height:27px;background:#bfbfbf"></div>
<div style="left:430px;top:292px;width:1px;height:27px;background:#bfbfbf"></div>
<div style="left:474px;top:292px;width:1px;height:27px;background:#bfbfbf"></div>
<div style="left:536px;top:292px;width:1px;height:27px;background:#bfbfbf"></div>
<div style="left:582px;top:292px;width:1px;height:27px;background:#bfbfbf"></div>
<div style="left:644px;top:292px;width:1px;height:27px;background:#bfbfbf"></div>
<div style="left:708px;top:292px;width:1px;height:27px;background:#bfbfbf"></div>
<div style="left:772px;top:292px;width:1px;height:27px;background:#bfbfbf"></div>
<div style="left:811px;top:292px;width:1px;height:27px;background:#bfbfbf"></div>
<div style="left:850px;top:292px;width:1px;height:27px;background:#bfbfbf"></div>
<div style="left:908px;top:292px;width:1px;height:27px;background:#bfbfbf"></div>
<div style="left:0px;top:319px;width:909px;height:1px;background:#bfbfbf"></div>
<div class="c" style="left:0px;top:320px;width:47px;height:27px;background:#0842aa;color:#fff"><span class="z">韩K联</span></div>
<div class="c" style="left:48px;top:320px;width:75px;height:27px;background:#ffffff;color:#333"><span style="letter-spacing:.3px">25-09-13</span></div>
<div class="c" style="left:124px;top:320px;width:72px;height:27px;background:#ffffff;color:#1a1a1a"><span class="z"><span style="color:#008000">全北现代</span></span></div>
<div class="c" style="left:197px;top:320px;width:87px;height:27px;background:#ffffff;color:#333"><span style="letter-spacing:.4px"><span style="color:#ff0000">1-0</span>(0-0)</span></div>
<div class="c" style="left:285px;top:320px;width:37px;height:27px;background:#ffffff;color:#333">3-6</div>
<div class="c" style="left:323px;top:320px;width:107px;height:27px;background:#ffffff;color:#1a1a1a"><span class="z">大田韩亚市民</span></div>
<div class="c" style="left:431px;top:320px;width:43px;height:27px;background:#fefaf8;color:#333">1.07</div>
<div class="c" style="left:475px;top:320px;width:61px;height:27px;background:#fefaf8;color:#1a1a1a"><span class="z">半<i class="sl">/</i>一</span></div>
<div class="c" style="left:537px;top:320px;width:45px;height:27px;background:#fefaf8;color:#333">0.82</div>
<div class="c" style="left:583px;top:320px;width:61px;height:27px;background:#f0f8fb;color:#333">1.83</div>
<div class="c" style="left:645px;top:320px;width:63px;height:27px;background:#f0f8fb;color:#333">3.62</div>
<div class="c" style="left:709px;top:320px;width:63px;height:27px;background:#f0f8fb;color:#333">3.89</div>
<div class="c" style="left:773px;top:320px;width:38px;height:27px;background:#ffffff;color:#333;padding-right:2px"><span class="z"><span style="color:#ff0000">勝</span></span></div>
<div class="c" style="left:812px;top:320px;width:38px;height:27px;background:#ffffff;color:#333;padding-right:2px"><span class="z"><span style="color:#ff0000">贏</span></span></div>
<div class="c" style="left:851px;top:320px;width:57px;height:27px;background:#ffffff;color:#333;padding-right:2px"><span class="z"><span style="color:#008000">小</span></span></div>
<div style="left:47px;top:320px;width:1px;height:27px;background:#bfbfbf"></div>
<div style="left:123px;top:320px;width:1px;height:27px;background:#bfbfbf"></div>
<div style="left:196px;top:320px;width:1px;height:27px;background:#bfbfbf"></div>
<div style="left:284px;top:320px;width:1px;height:27px;background:#bfbfbf"></div>
<div style="left:322px;top:320px;width:1px;height:27px;background:#bfbfbf"></div>
<div style="left:430px;top:320px;width:1px;height:27px;background:#bfbfbf"></div>
<div style="left:474px;top:320px;width:1px;height:27px;background:#bfbfbf"></div>
<div style="left:536px;top:320px;width:1px;height:27px;background:#bfbfbf"></div>
<div style="left:582px;top:320px;width:1px;height:27px;background:#bfbfbf"></div>
<div style="left:644px;top:320px;width:1px;height:27px;background:#bfbfbf"></div>
<div style="left:708px;top:320px;width:1px;height:27px;background:#bfbfbf"></div>
<div style="left:772px;top:320px;width:1px;height:27px;background:#bfbfbf"></div>
<div style="left:811px;top:320px;width:1px;height:27px;background:#bfbfbf"></div>
<div style="left:850px;top:320px;width:1px;height:27px;background:#bfbfbf"></div>
<div style="left:908px;top:320px;width:1px;height:27px;background:#bfbfbf"></div>
<div style="left:0px;top:347px;width:909px;height:1px;background:#bfbfbf"></div>
<div class="c" style="left:0px;top:348px;width:47px;height:27px;background:#0842aa;color:#fff"><span class="z">韩K联</span></div>
<div class="c" style="left:48px;top:348px;width:75px;height:27px;background:#efefef;color:#333"><span style="letter-spacing:.3px">25-08-30</span></div>
<div class="c" style="left:124px;top:348px;width:72px;height:27px;background:#efefef;color:#1a1a1a"><span class="z">蔚山</span></div>
<div class="c" style="left:197px;top:348px;width:87px;height:27px;background:#efefef;color:#333"><span style="letter-spacing:.4px"><span style="color:#ff0000">0-2</span>(0-0)</span></div>
<div class="c" style="left:285px;top:348px;width:37px;height:27px;background:#efefef;color:#333">4-5</div>
<div class="c" style="left:323px;top:348px;width:107px;height:27px;background:#efefef;color:#1a1a1a"><span class="z"><span style="color:#008000">全北现代</span></span></div>
<div class="c" style="left:431px;top:348px;width:43px;height:27px;background:#fefaf8;color:#333">1.06</div>
<div class="c" style="left:475px;top:348px;width:61px;height:27px;background:#fefaf8;color:#1a1a1a"><span class="z">平<i class="sl">/</i>半</span></div>
<div class="c" style="left:537px;top:348px;width:45px;height:27px;background:#fefaf8;color:#333">0.83</div>
<div class="c" style="left:583px;top:348px;width:61px;height:27px;background:#f0f8fb;color:#333">2.33</div>
<div class="c" style="left:645px;top:348px;width:63px;height:27px;background:#f0f8fb;color:#333">3.45</div>
<div class="c" style="left:709px;top:348px;width:63px;height:27px;background:#f0f8fb;color:#333">2.77</div>
<div class="c" style="left:773px;top:348px;width:38px;height:27px;background:#efefef;color:#333;padding-right:2px"><span class="z"><span style="color:#ff0000">勝</span></span></div>
<div class="c" style="left:812px;top:348px;width:38px;height:27px;background:#efefef;color:#333;padding-right:2px"><span class="z"><span style="color:#ff0000">贏</span></span></div>
<div class="c" style="left:851px;top:348px;width:57px;height:27px;background:#efefef;color:#333;padding-right:2px"><span class="z"><span style="color:#008000">小</span></span></div>
<div style="left:47px;top:348px;width:1px;height:27px;background:#bfbfbf"></div>
<div style="left:123px;top:348px;width:1px;height:27px;background:#bfbfbf"></div>
<div style="left:196px;top:348px;width:1px;height:27px;background:#bfbfbf"></div>
<div style="left:284px;top:348px;width:1px;height:27px;background:#bfbfbf"></div>
<div style="left:322px;top:348px;width:1px;height:27px;background:#bfbfbf"></div>
<div style="left:430px;top:348px;width:1px;height:27px;background:#bfbfbf"></div>
<div style="left:474px;top:348px;width:1px;height:27px;background:#bfbfbf"></div>
<div style="left:536px;top:348px;width:1px;height:27px;background:#bfbfbf"></div>
<div style="left:582px;top:348px;width:1px;height:27px;background:#bfbfbf"></div>
<div style="left:644px;top:348px;width:1px;height:27px;background:#bfbfbf"></div>
<div style="left:708px;top:348px;width:1px;height:27px;background:#bfbfbf"></div>
<div style="left:772px;top:348px;width:1px;height:27px;background:#bfbfbf"></div>
<div style="left:811px;top:348px;width:1px;height:27px;background:#bfbfbf"></div>
<div style="left:850px;top:348px;width:1px;height:27px;background:#bfbfbf"></div>
<div style="left:908px;top:348px;width:1px;height:27px;background:#bfbfbf"></div>
<div style="left:0px;top:375px;width:909px;height:1px;background:#bfbfbf"></div>
<div style="left:0px;top:376px;width:908px;height:27px;background:#fff"></div>
<div style="left:908px;top:375px;width:1px;height:29px;background:#bfbfbf"></div>
<div style="left:0px;top:403px;width:909px;height:1px;background:#bfbfbf"></div>
<div class="t" style="left:286.5px;top:381px;line-height:16px">近</div>
<div class="t" style="left:298.5px;top:381px;line-height:16px;color:#ff0000">10</div>
<div class="t" style="left:313px;top:381px;line-height:16px">场,胜</div>
<div class="t" style="left:341.5px;top:381px;line-height:16px">4</div>
<div class="t" style="left:348px;top:381px;line-height:16px">平</div>
<div class="t" style="left:359px;top:381px;line-height:16px">4</div>
<div class="t" style="left:365.5px;top:381px;line-height:16px">负</div>
<div class="t" style="left:379px;top:381px;line-height:16px">2,</div>
<div class="t" style="left:393px;top:381px;line-height:16px">胜率:</div>
<div class="t" style="left:422px;top:381px;line-height:16px;color:#0000ff">40%</div>
<div class="t" style="left:450.5px;top:381px;line-height:16px">赢率:</div>
<div class="t" style="left:480px;top:381px;line-height:16px;color:#0000ff">50%</div>
<div class="t" style="left:510px;top:381px;line-height:16px">大:</div>
<div class="t" style="left:566px;top:381px;line-height:16px">单率:</div>
<div class="t" style="left:594.5px;top:381px;line-height:16px;color:#008000">30%</div>
<div style="left:526px;top:380px;width:36px;height:18px;background:#008000;color:#fff;font-size:13px;line-height:18px;text-align:center">20%</div>
<div style="left:0px;top:404px;width:909px;height:25px;background:#dde3eb"></div>
<div class="t" style="left:19px;top:412px;font-weight:bold;font-size:13px;color:#333;line-height:16px">首尔</div>
<div class="t" style="left:311px;top:413.5px;line-height:16px">近</div>
<div class="sel" style="left:327px;top:411px;width:36px;height:16px"><span style="font-size:11px;line-height:14px">10</span><svg width="6" height="5" style="right:5px;top:5px"><path d="M0 0H6L3 5.3Z" fill="#111"/></svg></div>
<div class="t" style="left:367px;top:413.5px;line-height:16px">场</div>
<div class="cb" style="left:383px;top:414px"></div>
<div class="t" style="left:400px;top:413.5px;line-height:16px">同客</div>
<div class="cb" style="left:428px;top:414px"><svg width="12" height="12" viewBox="0 0 12 12"><path d="M2.6 5.8L4.9 8.4L9.2 3" fill="none" stroke="#383838" stroke-width="2.4"/></svg></div>
<div class="t" style="left:440px;top:413.5px;line-height:16px">亚冠精英</div>
<div class="cb" style="left:490px;top:414px"><svg width="12" height="12" viewBox="0 0 12 12"><path d="M2.6 5.8L4.9 8.4L9.2 3" fill="none" stroke="#383838" stroke-width="2.4"/></svg></div>
<div class="t" style="left:501px;top:413.5px;line-height:16px">韩K联</div>
<div class="cb" style="left:533px;top:414px"><svg width="12" height="12" viewBox="0 0 12 12"><path d="M2.6 5.8L4.9 8.4L9.2 3" fill="none" stroke="#383838" stroke-width="2.4"/></svg></div>
<div class="t" style="left:545px;top:413.5px;line-height:16px">球会友谊</div>
<div class="cb" style="left:594px;top:414px"><svg width="12" height="12" viewBox="0 0 12 12"><path d="M2.6 5.8L4.9 8.4L9.2 3" fill="none" stroke="#383838" stroke-width="2.4"/></svg></div>
<div class="t" style="left:606px;top:413.5px;line-height:16px">韩国杯</div>
<div style="left:0px;top:429px;width:909px;height:1px;background:#bfbfbf"></div>
<div style="left:0px;top:430px;width:909px;height:40px;background:#dde3eb"></div>
<div class="c" style="left:-1px;top:430px;width:70px;height:40px;color:#222">类型</div>
<div class="c" style="left:70px;top:430px;width:73px;height:40px;color:#222">日期</div>
<div class="c" style="left:144px;top:430px;width:104px;height:40px;color:#222">主场</div>
<div class="c" style="left:249px;top:430px;width:84px;height:40px;color:#222">比分(半场)</div>
<div class="c" style="left:334px;top:430px;width:38px;height:40px;color:#222">角球</div>
<div class="c" style="left:373px;top:430px;width:70px;height:40px;color:#222">客场</div>
<div style="left:70px;top:430px;width:1px;height:40px;background:#bfbfbf"></div>
<div style="left:144px;top:430px;width:1px;height:40px;background:#bfbfbf"></div>
<div style="left:249px;top:430px;width:1px;height:40px;background:#bfbfbf"></div>
<div style="left:334px;top:430px;width:1px;height:40px;background:#bfbfbf"></div>
<div style="left:373px;top:430px;width:1px;height:40px;background:#bfbfbf"></div>
<div style="left:444px;top:430px;width:1px;height:40px;background:#bfbfbf"></div>
<div style="left:592px;top:430px;width:1px;height:40px;background:#bfbfbf"></div>
<div style="left:776px;top:430px;width:1px;height:40px;background:#bfbfbf"></div>
<div style="left:908px;top:430px;width:1px;height:40px;background:#bfbfbf"></div>
<div style="left:444px;top:452px;width:465px;height:1px;background:#bfbfbf"></div>
<div class="c" style="left:445px;top:453px;width:42px;height:17px;color:#222"><span class="z">主</span></div>
<div style="left:487px;top:453px;width:1px;height:17px;background:#bfbfbf"></div>
<div class="c" style="left:488px;top:453px;width:59px;height:17px;color:#222"><span class="z">盘口</span></div>
<div style="left:547px;top:453px;width:1px;height:17px;background:#bfbfbf"></div>
<div class="c" style="left:548px;top:453px;width:44px;height:17px;color:#222"><span class="z">客</span></div>
<div style="left:592px;top:453px;width:1px;height:17px;background:#bfbfbf"></div>
<div class="c" style="left:593px;top:453px;width:59px;height:17px;color:#222"><span class="z">主</span></div>
<div style="left:652px;top:453px;width:1px;height:17px;background:#bfbfbf"></div>
<div class="c" style="left:653px;top:453px;width:61px;height:17px;color:#222"><span class="z">和</span></div>
<div style="left:714px;top:453px;width:1px;height:17px;background:#bfbfbf"></div>
<div class="c" style="left:715px;top:453px;width:61px;height:17px;color:#222"><span class="z">客</span></div>
<div style="left:776px;top:453px;width:1px;height:17px;background:#bfbfbf"></div>
<div class="c" style="left:777px;top:453px;width:37px;height:17px;color:#222"><span class="z">胜负</span></div>
<div style="left:814px;top:453px;width:1px;height:17px;background:#bfbfbf"></div>
<div class="c" style="left:815px;top:453px;width:37px;height:17px;color:#222"><span class="z">让球</span></div>
<div style="left:852px;top:453px;width:1px;height:17px;background:#bfbfbf"></div>
<div class="c" style="left:853px;top:453px;width:54px;height:17px;color:#222"><span class="z">进球数</span></div>
<div style="left:908px;top:453px;width:1px;height:17px;background:#bfbfbf"></div>
<div class="sel" style="left:467px;top:431px;width:59px;height:20px"><span style="font-size:13px;line-height:18px">Crow*</span><svg width="6" height="5" style="right:5px;top:7px"><path d="M0 0H6L3 5.3Z" fill="#111"/></svg></div>
<div class="sel" style="left:534px;top:431px;width:36px;height:20px"><span style="font-size:12px;line-height:18px">终</span><svg width="6" height="5" style="right:5px;top:7px"><path d="M0 0H6L3 5.3Z" fill="#111"/></svg></div>
<div class="sel" style="left:620px;top:431px;width:84px;height:20px"><span style="font-size:12px;line-height:18px">胜平负均值</span><svg width="6" height="5" style="right:5px;top:7px"><path d="M0 0H6L3 5.3Z" fill="#111"/></svg></div>
<div class="sel" style="left:712px;top:431px;width:36px;height:20px"><span style="font-size:12px;line-height:18px">终</span><svg width="6" height="5" style="right:5px;top:7px"><path d="M0 0H6L3 5.3Z" fill="#111"/></svg></div>
<div class="sel" style="left:818px;top:431px;width:48px;height:20px"><span style="font-size:12px;line-height:18px">全场</span><svg width="6" height="5" style="right:5px;top:7px"><path d="M0 0H6L3 5.3Z" fill="#111"/></svg></div>
<div style="left:0px;top:470px;width:909px;height:1px;background:#bfbfbf"></div>
<div class="c" style="left:0px;top:471px;width:70px;height:27px;background:#0000dd;color:#fff"><span class="z">亚冠精英</span></div>
<div class="c" style="left:71px;top:471px;width:73px;height:27px;background:#ffffff;color:#333"><span style="letter-spacing:.3px">25-11-25</span></div>
<div class="c" style="left:145px;top:471px;width:104px;height:27px;background:#ffffff;color:#1a1a1a"><span class="z">上海海港</span></div>
<div class="c" style="left:250px;top:471px;width:84px;height:27px;background:#ffffff;color:#333"><span style="letter-spacing:.4px"><span style="color:#ff0000">1-3</span>(0-0)</span></div>
<div class="c" style="left:335px;top:471px;width:38px;height:27px;background:#ffffff;color:#333">2-1</div>
<div class="c" style="left:374px;top:471px;width:70px;height:27px;background:#ffffff;color:#1a1a1a"><span class="z"><span style="color:#008000">首尔</span></span></div>
<div class="c" style="left:445px;top:471px;width:42px;height:27px;background:#fefaf8;color:#333">0.97</div>
<div class="c" style="left:488px;top:471px;width:59px;height:27px;background:#fefaf8;color:#1a1a1a"><span class="z"><i class="st">*</i>半<i class="sl">/</i>一</span></div>
<div class="c" style="left:548px;top:471px;width:44px;height:27px;background:#fefaf8;color:#333">0.85</div>
<div class="c" style="left:593px;top:471px;width:59px;height:27px;background:#f0f8fb;color:#333">4.23</div>
<div class="c" style="left:653px;top:471px;width:61px;height:27px;background:#f0f8fb;color:#333">3.85</div>
<div class="c" style="left:715px;top:471px;width:61px;height:27px;background:#f0f8fb;color:#333">1.75</div>
<div class="c" style="left:777px;top:471px;width:37px;height:27px;background:#ffffff;color:#333;padding-right:2px"><span class="z"><span style="color:#ff0000">勝</span></span></div>
<div class="c" style="left:815px;top:471px;width:37px;height:27px;background:#ffffff;color:#333;padding-right:2px"><span class="z"><span style="color:#ff0000">贏</span></span></div>
<div class="c" style="left:853px;top:471px;width:55px;height:27px;background:#ffffff;color:#333;padding-right:2px"><span class="z"><span style="color:#ff0000">大</span></span></div>
<div style="left:70px;top:471px;width:1px;height:27px;background:#bfbfbf"></div>
<div style="left:144px;top:471px;width:1px;height:27px;background:#bfbfbf"></div>
<div style="left:249px;top:471px;width:1px;height:27px;background:#bfbfbf"></div>
<div style="left:334px;top:471px;width:1px;height:27px;background:#bfbfbf"></div>
<div style="left:373px;top:471px;width:1px;height:27px;background:#bfbfbf"></div>
<div style="left:444px;top:471px;width:1px;height:27px;background:#bfbfbf"></div>
<div style="left:487px;top:471px;width:1px;height:27px;background:#bfbfbf"></div>
<div style="left:547px;top:471px;width:1px;height:27px;background:#bfbfbf"></div>
<div style="left:592px;top:471px;width:1px;height:27px;background:#bfbfbf"></div>
<div style="left:652px;top:471px;width:1px;height:27px;background:#bfbfbf"></div>
<div style="left:714px;top:471px;width:1px;height:27px;background:#bfbfbf"></div>
<div style="left:776px;top:471px;width:1px;height:27px;background:#bfbfbf"></div>
<div style="left:814px;top:471px;width:1px;height:27px;background:#bfbfbf"></div>
<div style="left:852px;top:471px;width:1px;height:27px;background:#bfbfbf"></div>
<div style="left:908px;top:471px;width:1px;height:27px;background:#bfbfbf"></div>
<div style="left:0px;top:498px;width:909px;height:1px;background:#bfbfbf"></div>
<div class="c" style="left:0px;top:499px;width:70px;height:27px;background:#0842aa;color:#fff"><span class="z">韩K联</span></div>
<div class="c" style="left:71px;top:499px;width:73px;height:27px;background:#efefef;color:#333"><span style="letter-spacing:.3px">25-11-22</span></div>
<div class="c" style="left:145px;top:499px;width:104px;height:27px;background:#efefef;color:#1a1a1a"><span class="z"><span class="badge">1</span><span style="color:#008000">首尔</span></span></div>
<div class="c" style="left:250px;top:499px;width:84px;height:27px;background:#efefef;color:#333"><span style="letter-spacing:.4px"><span style="color:#ff0000">1-3</span>(1-1)</span></div>
<div class="c" style="left:335px;top:499px;width:38px;height:27px;background:#efefef;color:#333">3-1</div>
<div class="c" style="left:374px;top:499px;width:70px;height:27px;background:#efefef;color:#1a1a1a"><span class="z">金泉尚武</span></div>
<div class="c" style="left:445px;top:499px;width:42px;height:27px;background:#fefaf8;color:#333">0.78</div>
<div class="c" style="left:488px;top:499px;width:59px;height:27px;background:#fefaf8;color:#1a1a1a"><span class="z">半<i class="sl">/</i>一</span></div>
<div class="c" style="left:548px;top:499px;width:44px;height:27px;background:#fefaf8;color:#333">1.11</div>
<div class="c" style="left:593px;top:499px;width:59px;height:27px;background:#f0f8fb;color:#333">1.82</div>
<div class="c" style="left:653px;top:499px;width:61px;height:27px;background:#f0f8fb;color:#333">3.72</div>
<div class="c" style="left:715px;top:499px;width:61px;height:27px;background:#f0f8fb;color:#333">3.97</div>
<div class="c" style="left:777px;top:499px;width:37px;height:27px;background:#efefef;color:#333;padding-right:2px"><span class="z"><span style="color:#008000">負</span></span></div>
<div class="c" style="left:815px;top:499px;width:37px;height:27px;background:#efefef;color:#333;padding-right:2px"><span class="z"><span style="color:#008000">輸</span></span></div>
<div class="c" style="left:853px;top:499px;width:55px;height:27px;background:#efefef;color:#333;padding-right:2px"><span class="z"><span style="color:#ff0000">大</span></span></div>
<div style="left:70px;top:499px;width:1px;height:27px;background:#bfbfbf"></div>
<div style="left:144px;top:499px;width:1px;height:27px;background:#bfbfbf"></div>
<div style="left:249px;top:499px;width:1px;height:27px;background:#bfbfbf"></div>
<div style="left:334px;top:499px;width:1px;height:27px;background:#bfbfbf"></div>
<div style="left:373px;top:499px;width:1px;height:27px;background:#bfbfbf"></div>
<div style="left:444px;top:499px;width:1px;height:27px;background:#bfbfbf"></div>
<div style="left:487px;top:499px;width:1px;height:27px;background:#bfbfbf"></div>
<div style="left:547px;top:499px;width:1px;height:27px;background:#bfbfbf"></div>
<div style="left:592px;top:499px;width:1px;height:27px;background:#bfbfbf"></div>
<div style="left:652px;top:499px;width:1px;height:27px;background:#bfbfbf"></div>
<div style="left:714px;top:499px;width:1px;height:27px;background:#bfbfbf"></div>
<div style="left:776px;top:499px;width:1px;height:27px;background:#bfbfbf"></div>
<div style="left:814px;top:499px;width:1px;height:27px;background:#bfbfbf"></div>
<div style="left:852px;top:499px;width:1px;height:27px;background:#bfbfbf"></div>
<div style="left:908px;top:499px;width:1px;height:27px;background:#bfbfbf"></div>
<div style="left:0px;top:526px;width:909px;height:1px;background:#bfbfbf"></div>
<div class="c" style="left:0px;top:527px;width:70px;height:27px;background:#0842aa;color:#fff"><span class="z">韩K联</span></div>
<div class="c" style="left:71px;top:527px;width:73px;height:27px;background:#ffffff;color:#333"><span style="letter-spacing:.3px">25-11-09</span></div>
<div class="c" style="left:145px;top:527px;width:104px;height:27px;background:#ffffff;color:#1a1a1a"><span class="z">浦项制铁</span></div>
<div class="c" style="left:250px;top:527px;width:84px;height:27px;background:#ffffff;color:#333"><span style="letter-spacing:.4px"><span style="color:#ff0000">0-0</span>(0-0)</span></div>
<div class="c" style="left:335px;top:527px;width:38px;height:27px;background:#ffffff;color:#333">5-7</div>
<div class="c" style="left:374px;top:527px;width:70px;height:27px;background:#ffffff;color:#1a1a1a"><span class="z"><span style="color:#008000">首尔</span></span></div>
<div class="c" style="left:445px;top:527px;width:42px;height:27px;background:#fefaf8;color:#333">0.89</div>
<div class="c" style="left:488px;top:527px;width:59px;height:27px;background:#fefaf8;color:#1a1a1a"><span class="z">平手</span></div>
<div class="c" style="left:548px;top:527px;width:44px;height:27px;background:#fefaf8;color:#333">0.99</div>
<div class="c" style="left:593px;top:527px;width:59px;height:27px;background:#f0f8fb;color:#333">2.57</div>
<div class="c" style="left:653px;top:527px;width:61px;height:27px;background:#f0f8fb;color:#333">3.17</div>
<div class="c" style="left:715px;top:527px;width:61px;height:27px;background:#f0f8fb;color:#333">2.64</div>
<div class="c" style="left:777px;top:527px;width:37px;height:27px;background:#ffffff;color:#333;padding-right:2px"><span class="z"><span style="color:#0000ff">平</span></span></div>
<div class="c" style="left:815px;top:527px;width:37px;height:27px;background:#ffffff;color:#333;padding-right:2px"><span class="z"><span style="color:#0000ff">走</span></span></div>
<div class="c" style="left:853px;top:527px;width:55px;height:27px;background:#ffffff;color:#333;padding-right:2px"><span class="z"><span style="color:#008000">小</span></span></div>
<div style="left:70px;top:527px;width:1px;height:27px;background:#bfbfbf"></div>
<div style="left:144px;top:527px;width:1px;height:27px;background:#bfbfbf"></div>
<div style="left:249px;top:527px;width:1px;height:27px;background:#bfbfbf"></div>
<div style="left:334px;top:527px;width:1px;height:27px;background:#bfbfbf"></div>
<div style="left:373px;top:527px;width:1px;height:27px;background:#bfbfbf"></div>
<div style="left:444px;top:527px;width:1px;height:27px;background:#bfbfbf"></div>
<div style="left:487px;top:527px;width:1px;height:27px;background:#bfbfbf"></div>
<div style="left:547px;top:527px;width:1px;height:27px;background:#bfbfbf"></div>
<div style="left:592px;top:527px;width:1px;height:27px;background:#bfbfbf"></div>
<div style="left:652px;top:527px;width:1px;height:27px;background:#bfbfbf"></div>
<div style="left:714px;top:527px;width:1px;height:27px;background:#bfbfbf"></div>
<div style="left:776px;top:527px;width:1px;height:27px;background:#bfbfbf"></div>
<div style="left:814px;top:527px;width:1px;height:27px;background:#bfbfbf"></div>
<div style="left:852px;top:527px;width:1px;height:27px;background:#bfbfbf"></div>
<div style="left:908px;top:527px;width:1px;height:27px;background:#bfbfbf"></div>
<div style="left:0px;top:554px;width:909px;height:1px;background:#bfbfbf"></div>
<div class="c" style="left:0px;top:555px;width:70px;height:27px;background:#0000dd;color:#fff"><span class="z">亚冠精英</span></div>
<div class="c" style="left:71px;top:555px;width:73px;height:27px;background:#efefef;color:#333"><span style="letter-spacing:.3px">25-11-04</span></div>
<div class="c" style="left:145px;top:555px;width:104px;height:27px;background:#efefef;color:#1a1a1a"><span class="z"><span style="color:#008000">首尔</span></span></div>
<div class="c" style="left:250px;top:555px;width:84px;height:27px;background:#efefef;color:#333"><span style="letter-spacing:.4px"><span style="color:#ff0000">0-0</span>(0-0)</span></div>
<div class="c" style="left:335px;top:555px;width:38px;height:27px;background:#efefef;color:#333">3-3</div>
<div class="c" style="left:374px;top:555px;width:70px;height:27px;background:#efefef;color:#1a1a1a"><span class="z">成都蓉城</span></div>
<div class="c" style="left:445px;top:555px;width:42px;height:27px;background:#fefaf8;color:#333">0.92</div>
<div class="c" style="left:488px;top:555px;width:59px;height:27px;background:#fefaf8;color:#1a1a1a"><span class="z">半<i class="sl">/</i>一</span></div>
<div class="c" style="left:548px;top:555px;width:44px;height:27px;background:#fefaf8;color:#333">0.90</div>
<div class="c" style="left:593px;top:555px;width:59px;height:27px;background:#f0f8fb;color:#333">1.79</div>
<div class="c" style="left:653px;top:555px;width:61px;height:27px;background:#f0f8fb;color:#333">3.69</div>
<div class="c" style="left:715px;top:555px;width:61px;height:27px;background:#f0f8fb;color:#333">4.00</div>
<div class="c" style="left:777px;top:555px;width:37px;height:27px;background:#efefef;color:#333;padding-right:2px"><span class="z"><span style="color:#0000ff">平</span></span></div>
<div class="c" style="left:815px;top:555px;width:37px;height:27px;background:#efefef;color:#333;padding-right:2px"><span class="z"><span style="color:#008000">輸</span></span></div>
<div class="c" style="left:853px;top:555px;width:55px;height:27px;background:#efefef;color:#333;padding-right:2px"><span class="z"><span style="color:#008000">小</span></span></div>
<div style="left:70px;top:555px;width:1px;height:27px;background:#bfbfbf"></div>
<div style="left:144px;top:555px;width:1px;height:27px;background:#bfbfbf"></div>
<div style="left:249px;top:555px;width:1px;height:27px;background:#bfbfbf"></div>
<div style="left:334px;top:555px;width:1px;height:27px;background:#bfbfbf"></div>
<div style="left:373px;top:555px;width:1px;height:27px;background:#bfbfbf"></div>
<div style="left:444px;top:555px;width:1px;height:27px;background:#bfbfbf"></div>
<div style="left:487px;top:555px;width:1px;height:27px;background:#bfbfbf"></div>
<div style="left:547px;top:555px;width:1px;height:27px;background:#bfbfbf"></div>
<div style="left:592px;top:555px;width:1px;height:27px;background:#bfbfbf"></div>
<div style="left:652px;top:555px;width:1px;height:27px;background:#bfbfbf"></div>
<div style="left:714px;top:555px;width:1px;height:27px;background:#bfbfbf"></div>
<div style="left:776px;top:555px;width:1px;height:27px;background:#bfbfbf"></div>
<div style="left:814px;top:555px;width:1px;height:27px;background:#bfbfbf"></div>
<div style="left:852px;top:555px;width:1px;height:27px;background:#bfbfbf"></div>
<div style="left:908px;top:555px;width:1px;height:27px;background:#bfbfbf"></div>
<div style="left:0px;top:582px;width:909px;height:1px;background:#bfbfbf"></div>
<div class="c" style="left:0px;top:583px;width:70px;height:27px;background:#0842aa;color:#fff"><span class="z">韩K联</span></div>
<div class="c" style="left:71px;top:583px;width:73px;height:27px;background:#ffffff;color:#333"><span style="letter-spacing:.3px">25-11-01</span></div>
<div class="c" style="left:145px;top:583px;width:104px;height:27px;background:#ffffff;color:#1a1a1a"><span class="z">大田韩亚市民</span></div>
<div class="c" style="left:250px;top:583px;width:84px;height:27px;background:#ffffff;color:#333"><span style="letter-spacing:.4px"><span style="color:#ff0000">3-1</span>(0-0)</span></div>
<div class="c" style="left:335px;top:583px;width:38px;height:27px;background:#ffffff;color:#333">8-2</div>
<div class="c" style="left:374px;top:583px;width:70px;height:27px;background:#ffffff;color:#1a1a1a"><span class="z"><span style="color:#008000">首尔</span></span></div>
<div class="c" style="left:445px;top:583px;width:42px;height:27px;background:#fefaf8;color:#333">0.85</div>
<div class="c" style="left:488px;top:583px;width:59px;height:27px;background:#fefaf8;color:#1a1a1a"><span class="z">平手</span></div>
<div class="c" style="left:548px;top:583px;width:44px;height:27px;background:#fefaf8;color:#333">1.03</div>
<div class="c" style="left:593px;top:583px;width:59px;height:27px;background:#f0f8fb;color:#333">2.46</div>
<div class="c" style="left:653px;top:583px;width:61px;height:27px;background:#f0f8fb;color:#333">3.44</div>
<div class="c" style="left:715px;top:583px;width:61px;height:27px;background:#f0f8fb;color:#333">2.59</div>
<div class="c" style="left:777px;top:583px;width:37px;height:27px;background:#ffffff;color:#333;padding-right:2px"><span class="z"><span style="color:#008000">負</span></span></div>
<div class="c" style="left:815px;top:583px;width:37px;height:27px;background:#ffffff;color:#333;padding-right:2px"><span class="z"><span style="color:#008000">輸</span></span></div>
<div class="c" style="left:853px;top:583px;width:55px;height:27px;background:#ffffff;color:#333;padding-right:2px"><span class="z"><span style="color:#ff0000">大</span></span></div>
<div style="left:70px;top:583px;width:1px;height:27px;background:#bfbfbf"></div>
<div style="left:144px;top:583px;width:1px;height:27px;background:#bfbfbf"></div>
<div style="left:249px;top:583px;width:1px;height:27px;background:#bfbfbf"></div>
<div style="left:334px;top:583px;width:1px;height:27px;background:#bfbfbf"></div>
<div style="left:373px;top:583px;width:1px;height:27px;background:#bfbfbf"></div>
<div style="left:444px;top:583px;width:1px;height:27px;background:#bfbfbf"></div>
<div style="left:487px;top:583px;width:1px;height:27px;background:#bfbfbf"></div>
<div style="left:547px;top:583px;width:1px;height:27px;background:#bfbfbf"></div>
<div style="left:592px;top:583px;width:1px;height:27px;background:#bfbfbf"></div>
<div style="left:652px;top:583px;width:1px;height:27px;background:#bfbfbf"></div>
<div style="left:714px;top:583px;width:1px;height:27px;background:#bfbfbf"></div>
<div style="left:776px;top:583px;width:1px;height:27px;background:#bfbfbf"></div>
<div style="left:814px;top:583px;width:1px;height:27px;background:#bfbfbf"></div>
<div style="left:852px;top:583px;width:1px;height:27px;background:#bfbfbf"></div>
<div style="left:908px;top:583px;width:1px;height:27px;background:#bfbfbf"></div>
<div style="left:0px;top:610px;width:909px;height:1px;background:#bfbfbf"></div>
<div class="c" style="left:0px;top:611px;width:70px;height:27px;background:#0842aa;color:#fff"><span class="z">韩K联</span></div>
<div class="c" style="left:71px;top:611px;width:73px;height:27px;background:#efefef;color:#333"><span style="letter-spacing:.3px">25-10-26</span></div>
<div class="c" style="left:145px;top:611px;width:104px;height:27px;background:#efefef;color:#1a1a1a"><span class="z"><span style="color:#008000">首尔</span></span></div>
<div class="c" style="left:250px;top:611px;width:84px;height:27px;background:#efefef;color:#333"><span style="letter-spacing:.4px"><span style="color:#ff0000">4-2</span>(0-1)</span></div>
<div class="c" style="left:335px;top:611px;width:38px;height:27px;background:#efefef;color:#333">10-4</div>
<div class="c" style="left:374px;top:611px;width:70px;height:27px;background:#efefef;color:#1a1a1a"><span class="z">江原</span></div>
<div class="c" style="left:445px;top:611px;width:42px;height:27px;background:#fefaf8;color:#333">0.85</div>
<div class="c" style="left:488px;top:611px;width:59px;height:27px;background:#fefaf8;color:#1a1a1a"><span class="z">平<i class="sl">/</i>半</span></div>
<div class="c" style="left:548px;top:611px;width:44px;height:27px;background:#fefaf8;color:#333">1.03</div>
<div class="c" style="left:593px;top:611px;width:59px;height:27px;background:#f0f8fb;color:#333">2.03</div>
<div class="c" style="left:653px;top:611px;width:61px;height:27px;background:#f0f8fb;color:#333">3.27</div>
<div class="c" style="left:715px;top:611px;width:61px;height:27px;background:#f0f8fb;color:#333">3.53</div>
<div class="c" style="left:777px;top:611px;width:37px;height:27px;background:#efefef;color:#333;padding-right:2px"><span class="z"><span style="color:#ff0000">勝</span></span></div>
<div class="c" style="left:815px;top:611px;width:37px;height:27px;background:#efefef;color:#333;padding-right:2px"><span class="z"><span style="color:#ff0000">贏</span></span></div>
<div class="c" style="left:853px;top:611px;width:55px;height:27px;background:#efefef;color:#333;padding-right:2px"><span class="z"><span style="color:#ff0000">大</span></span></div>
<div style="left:70px;top:611px;width:1px;height:27px;background:#bfbfbf"></div>
<div style="left:144px;top:611px;width:1px;height:27px;background:#bfbfbf"></div>
<div style="left:249px;top:611px;width:1px;height:27px;background:#bfbfbf"></div>
<div style="left:334px;top:611px;width:1px;height:27px;background:#bfbfbf"></div>
<div style="left:373px;top:611px;width:1px;height:27px;background:#bfbfbf"></div>
<div style="left:444px;top:611px;width:1px;height:27px;background:#bfbfbf"></div>
<div style="left:487px;top:611px;width:1px;height:27px;background:#bfbfbf"></div>
<div style="left:547px;top:611px;width:1px;height:27px;background:#bfbfbf"></div>
<div style="left:592px;top:611px;width:1px;height:27px;background:#bfbfbf"></div>
<div style="left:652px;top:611px;width:1px;height:27px;background:#bfbfbf"></div>
<div style="left:714px;top:611px;width:1px;height:27px;background:#bfbfbf"></div>
<div style="left:776px;top:611px;width:1px;height:27px;background:#bfbfbf"></div>
<div style="left:814px;top:611px;width:1px;height:27px;background:#bfbfbf"></div>
<div style="left:852px;top:611px;width:1px;height:27px;background:#bfbfbf"></div>
<div style="left:908px;top:611px;width:1px;height:27px;background:#bfbfbf"></div>
<div style="left:0px;top:638px;width:909px;height:1px;background:#bfbfbf"></div>
<div class="c" style="left:0px;top:639px;width:70px;height:27px;background:#0000dd;color:#fff"><span class="z">亚冠精英</span></div>
<div class="c" style="left:71px;top:639px;width:73px;height:27px;background:#ffffff;color:#333"><span style="letter-spacing:.3px">25-10-22</span></div>
<div class="c" style="left:145px;top:639px;width:104px;height:27px;background:#ffffff;color:#1a1a1a"><span class="z">上海申花</span></div>
<div class="c" style="left:250px;top:639px;width:84px;height:27px;background:#ffffff;color:#333"><span style="letter-spacing:.4px"><span style="color:#ff0000">2-0</span>(0-0)</span></div>
<div class="c" style="left:335px;top:639px;width:38px;height:27px;background:#ffffff;color:#333">5-7</div>
<div class="c" style="left:374px;top:639px;width:70px;height:27px;background:#ffffff;color:#1a1a1a"><span class="z"><span style="color:#008000">首尔</span></span></div>
<div class="c" style="left:445px;top:639px;width:42px;height:27px;background:#fefaf8;color:#333">0.90</div>
<div class="c" style="left:488px;top:639px;width:59px;height:27px;background:#fefaf8;color:#1a1a1a"><span class="z">平手</span></div>
<div class="c" style="left:548px;top:639px;width:44px;height:27px;background:#fefaf8;color:#333">0.92</div>
<div class="c" style="left:593px;top:639px;width:59px;height:27px;background:#f0f8fb;color:#333">2.75</div>
<div class="c" style="left:653px;top:639px;width:61px;height:27px;background:#f0f8fb;color:#333">3.47</div>
<div class="c" style="left:715px;top:639px;width:61px;height:27px;background:#f0f8fb;color:#333">2.35</div>
<div class="c" style="left:777px;top:639px;width:37px;height:27px;background:#ffffff;color:#333;padding-right:2px"><span class="z"><span style="color:#008000">負</span></span></div>
<div class="c" style="left:815px;top:639px;width:37px;height:27px;background:#ffffff;color:#333;padding-right:2px"><span class="z"><span style="color:#008000">輸</span></span></div>
<div class="c" style="left:853px;top:639px;width:55px;height:27px;background:#ffffff;color:#333;padding-right:2px"><span class="z"><span style="color:#008000">小</span></span></div>
<div style="left:70px;top:639px;width:1px;height:27px;background:#bfbfbf"></div>
<div style="left:144px;top:639px;width:1px;height:27px;background:#bfbfbf"></div>
<div style="left:249px;top:639px;width:1px;height:27px;background:#bfbfbf"></div>
<div style="left:334px;top:639px;width:1px;height:27px;background:#bfbfbf"></div>
<div style="left:373px;top:639px;width:1px;height:27px;background:#bfbfbf"></div>
<div style="left:444px;top:639px;width:1px;height:27px;background:#bfbfbf"></div>
<div style="left:487px;top:639px;width:1px;height:27px;background:#bfbfbf"></div>
<div style="left:547px;top:639px;width:1px;height:27px;background:#bfbfbf"></div>
<div style="left:592px;top:639px;width:1px;height:27px;background:#bfbfbf"></div>
<div style="left:652px;top:639px;width:1px;height:27px;background:#bfbfbf"></div>
<div style="left:714px;top:639px;width:1px;height:27px;background:#bfbfbf"></div>
<div style="left:776px;top:639px;width:1px;height:27px;background:#bfbfbf"></div>
<div style="left:814px;top:639px;width:1px;height:27px;background:#bfbfbf"></div>
<div style="left:852px;top:639px;width:1px;height:27px;background:#bfbfbf"></div>
<div style="left:908px;top:639px;width:1px;height:27px;background:#bfbfbf"></div>
<div style="left:0px;top:666px;width:909px;height:1px;background:#bfbfbf"></div>
<div class="c" style="left:0px;top:667px;width:70px;height:27px;background:#0842aa;color:#fff"><span class="z">韩K联</span></div>
<div class="c" style="left:71px;top:667px;width:73px;height:27px;background:#efefef;color:#333"><span style="letter-spacing:.3px">25-10-18</span></div>
<div class="c" style="left:145px;top:667px;width:104px;height:27px;background:#efefef;color:#1a1a1a"><span class="z"><span style="color:#008000">首尔</span></span></div>
<div class="c" style="left:250px;top:667px;width:84px;height:27px;background:#efefef;color:#333"><span style="letter-spacing:.4px"><span style="color:#ff0000">1-2</span>(0-1)</span></div>
<div class="c" style="left:335px;top:667px;width:38px;height:27px;background:#efefef;color:#333">3-2</div>
<div class="c" style="left:374px;top:667px;width:70px;height:27px;background:#efefef;color:#1a1a1a"><span class="z">浦项制铁</span></div>
<div class="c" style="left:445px;top:667px;width:42px;height:27px;background:#fefaf8;color:#333">0.90</div>
<div class="c" style="left:488px;top:667px;width:59px;height:27px;background:#fefaf8;color:#1a1a1a"><span class="z">平<i class="sl">/</i>半</span></div>
<div class="c" style="left:548px;top:667px;width:44px;height:27px;background:#fefaf8;color:#333">0.99</div>
<div class="c" style="left:593px;top:667px;width:59px;height:27px;background:#f0f8fb;color:#333">2.10</div>
<div class="c" style="left:653px;top:667px;width:61px;height:27px;background:#f0f8fb;color:#333">3.29</div>
<div class="c" style="left:715px;top:667px;width:61px;height:27px;background:#f0f8fb;color:#333">3.32</div>
<div class="c" style="left:777px;top:667px;width:37px;height:27px;background:#efefef;color:#333;padding-right:2px"><span class="z"><span style="color:#008000">負</span></span></div>
<div class="c" style="left:815px;top:667px;width:37px;height:27px;background:#efefef;color:#333;padding-right:2px"><span class="z"><span style="color:#008000">輸</span></span></div>
<div class="c" style="left:853px;top:667px;width:55px;height:27px;background:#efefef;color:#333;padding-right:2px"><span class="z"><span style="color:#ff0000">大</span></span></div>
<div style="left:70px;top:667px;width:1px;height:27px;background:#bfbfbf"></div>
<div style="left:144px;top:667px;width:1px;height:27px;background:#bfbfbf"></div>
<div style="left:249px;top:667px;width:1px;height:27px;background:#bfbfbf"></div>
<div style="left:334px;top:667px;width:1px;height:27px;background:#bfbfbf"></div>
<div style="left:373px;top:667px;width:1px;height:27px;background:#bfbfbf"></div>
<div style="left:444px;top:667px;width:1px;height:27px;background:#bfbfbf"></div>
<div style="left:487px;top:667px;width:1px;height:27px;background:#bfbfbf"></div>
<div style="left:547px;top:667px;width:1px;height:27px;background:#bfbfbf"></div>
<div style="left:592px;top:667px;width:1px;height:27px;background:#bfbfbf"></div>
<div style="left:652px;top:667px;width:1px;height:27px;background:#bfbfbf"></div>
<div style="left:714px;top:667px;width:1px;height:27px;background:#bfbfbf"></div>
<div style="left:776px;top:667px;width:1px;height:27px;background:#bfbfbf"></div>
<div style="left:814px;top:667px;width:1px;height:27px;background:#bfbfbf"></div>
<div style="left:852px;top:667px;width:1px;height:27px;background:#bfbfbf"></div>
<div style="left:908px;top:667px;width:1px;height:27px;background:#bfbfbf"></div>
<div style="left:0px;top:694px;width:909px;height:1px;background:#bfbfbf"></div>
<div class="c" style="left:0px;top:695px;width:70px;height:27px;background:#0842aa;color:#fff"><span class="z">韩K联</span></div>
<div class="c" style="left:71px;top:695px;width:73px;height:27px;background:#ffffff;color:#333"><span style="letter-spacing:.3px">25-10-05</span></div>
<div class="c" style="left:145px;top:695px;width:104px;height:27px;background:#ffffff;color:#1a1a1a"><span class="z">水原</span></div>
<div class="c" style="left:250px;top:695px;width:84px;height:27px;background:#ffffff;color:#333"><span style="letter-spacing:.4px"><span style="color:#ff0000">1-1</span>(1-1)</span></div>
<div class="c" style="left:335px;top:695px;width:38px;height:27px;background:#ffffff;color:#333">4-6</div>
<div class="c" style="left:374px;top:695px;width:70px;height:27px;background:#ffffff;color:#1a1a1a"><span class="z"><span style="color:#008000">首尔</span></span></div>
<div class="c" style="left:445px;top:695px;width:42px;height:27px;background:#fefaf8;color:#333">0.95</div>
<div class="c" style="left:488px;top:695px;width:59px;height:27px;background:#fefaf8;color:#1a1a1a"><span class="z"><i class="st">*</i>平<i class="sl">/</i>半</span></div>
<div class="c" style="left:548px;top:695px;width:44px;height:27px;background:#fefaf8;color:#333">0.93</div>
<div class="c" style="left:593px;top:695px;width:59px;height:27px;background:#f0f8fb;color:#333">3.22</div>
<div class="c" style="left:653px;top:695px;width:61px;height:27px;background:#f0f8fb;color:#333">3.54</div>
<div class="c" style="left:715px;top:695px;width:61px;height:27px;background:#f0f8fb;color:#333">2.05</div>
<div class="c" style="left:777px;top:695px;width:37px;height:27px;background:#ffffff;color:#333;padding-right:2px"><span class="z"><span style="color:#0000ff">平</span></span></div>
<div class="c" style="left:815px;top:695px;width:37px;height:27px;background:#ffffff;color:#333;padding-right:2px"><span class="z"><span style="color:#008000">輸</span></span></div>
<div class="c" style="left:853px;top:695px;width:55px;height:27px;background:#ffffff;color:#333;padding-right:2px"><span class="z"><span style="color:#008000">小</span></span></div>
<div style="left:70px;top:695px;width:1px;height:27px;background:#bfbfbf"></div>
<div style="left:144px;top:695px;width:1px;height:27px;background:#bfbfbf"></div>
<div style="left:249px;top:695px;width:1px;height:27px;background:#bfbfbf"></div>
<div style="left:334px;top:695px;width:1px;height:27px;background:#bfbfbf"></div>
<div style="left:373px;top:695px;width:1px;height:27px;background:#bfbfbf"></div>
<div style="left:444px;top:695px;width:1px;height:27px;background:#bfbfbf"></div>
<div style="left:487px;top:695px;width:1px;height:27px;background:#bfbfbf"></div>
<div style="left:547px;top:695px;width:1px;height:27px;background:#bfbfbf"></div>
<div style="left:592px;top:695px;width:1px;height:27px;background:#bfbfbf"></div>
<div style="left:652px;top:695px;width:1px;height:27px;background:#bfbfbf"></div>
<div style="left:714px;top:695px;width:1px;height:27px;background:#bfbfbf"></div>
<div style="left:776px;top:695px;width:1px;height:27px;background:#bfbfbf"></div>
<div style="left:814px;top:695px;width:1px;height:27px;background:#bfbfbf"></div>
<div style="left:852px;top:695px;width:1px;height:27px;background:#bfbfbf"></div>
<div style="left:908px;top:695px;width:1px;height:27px;background:#bfbfbf"></div>
<div style="left:0px;top:722px;width:909px;height:1px;background:#bfbfbf"></div>
<div class="c" style="left:0px;top:723px;width:70px;height:27px;background:#0000dd;color:#fff"><span class="z">亚冠精英</span></div>
<div class="c" style="left:71px;top:723px;width:73px;height:27px;background:#efefef;color:#333"><span style="letter-spacing:.3px">25-09-30</span></div>
<div class="c" style="left:145px;top:723px;width:104px;height:27px;background:#efefef;color:#1a1a1a"><span class="z"><span style="color:#008000">首尔</span></span></div>
<div class="c" style="left:250px;top:723px;width:84px;height:27px;background:#efefef;color:#333"><span style="letter-spacing:.4px"><span style="color:#ff0000">3-0</span>(2-0)</span></div>
<div class="c" style="left:335px;top:723px;width:38px;height:27px;background:#efefef;color:#333">7-3</div>
<div class="c" style="left:374px;top:723px;width:70px;height:27px;background:#efefef;color:#1a1a1a"><span class="z">武里南联</span></div>
<div class="c" style="left:445px;top:723px;width:42px;height:27px;background:#fefaf8;color:#333">0.86</div>
<div class="c" style="left:488px;top:723px;width:59px;height:27px;background:#fefaf8;color:#1a1a1a"><span class="z">半球</span></div>
<div class="c" style="left:548px;top:723px;width:44px;height:27px;background:#fefaf8;color:#333">0.96</div>
<div class="c" style="left:593px;top:723px;width:59px;height:27px;background:#f0f8fb;color:#333">1.83</div>
<div class="c" style="left:653px;top:723px;width:61px;height:27px;background:#f0f8fb;color:#333">3.54</div>
<div class="c" style="left:715px;top:723px;width:61px;height:27px;background:#f0f8fb;color:#333">4.00</div>
<div class="c" style="left:777px;top:723px;width:37px;height:27px;background:#efefef;color:#333;padding-right:2px"><span class="z"><span style="color:#ff0000">勝</span></span></div>
<div class="c" style="left:815px;top:723px;width:37px;height:27px;background:#efefef;color:#333;padding-right:2px"><span class="z"><span style="color:#ff0000">贏</span></span></div>
<div class="c" style="left:853px;top:723px;width:55px;height:27px;background:#efefef;color:#333;padding-right:2px"><span class="z"><span style="color:#ff0000">大</span></span></div>
<div style="left:70px;top:723px;width:1px;height:27px;background:#bfbfbf"></div>
<div style="left:144px;top:723px;width:1px;height:27px;background:#bfbfbf"></div>
<div style="left:249px;top:723px;width:1px;height:27px;background:#bfbfbf"></div>
<div style="left:334px;top:723px;width:1px;height:27px;background:#bfbfbf"></div>
<div style="left:373px;top:723px;width:1px;height:27px;background:#bfbfbf"></div>
<div style="left:444px;top:723px;width:1px;height:27px;background:#bfbfbf"></div>
<div style="left:487px;top:723px;width:1px;height:27px;background:#bfbfbf"></div>
<div style="left:547px;top:723px;width:1px;height:27px;background:#bfbfbf"></div>
<div style="left:592px;top:723px;width:1px;height:27px;background:#bfbfbf"></div>
<div style="left:652px;top:723px;width:1px;height:27px;background:#bfbfbf"></div>
<div style="left:714px;top:723px;width:1px;height:27px;background:#bfbfbf"></div>
<div style="left:776px;top:723px;width:1px;height:27px;background:#bfbfbf"></div>
<div style="left:814px;top:723px;width:1px;height:27px;background:#bfbfbf"></div>
<div style="left:852px;top:723px;width:1px;height:27px;background:#bfbfbf"></div>
<div style="left:908px;top:723px;width:1px;height:27px;background:#bfbfbf"></div>
<div style="left:0px;top:750px;width:909px;height:1px;background:#bfbfbf"></div></body></html>
